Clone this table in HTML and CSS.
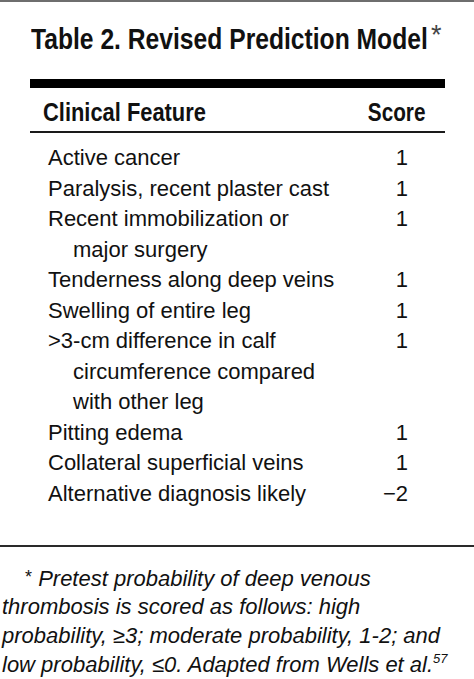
FILE: index.html
```html
<!DOCTYPE html>
<html>
<head>
<meta charset="utf-8">
<link rel="stylesheet" href="styles.css">
</head>
<body>
<div class="page">
  <div class="topbar"></div>
  <h1 class="title"><span class="title-text">Table 2. Revised Prediction Model</span><span class="title-star">*</span></h1>
  <div class="table">
    <div class="thick-rule"></div>
    <div class="head">
      <span class="head-feature">Clinical Feature</span>
      <span class="head-score">Score</span>
    </div>
    <div class="thin-rule"></div>
    <div class="rows">
      <div class="feature">Active cancer</div><div class="score">1</div>
      <div class="feature">Paralysis, recent plaster cast</div><div class="score">1</div>
      <div class="feature">Recent immobilization or<br>major surgery</div><div class="score">1</div>
      <div class="feature">Tenderness along deep veins</div><div class="score">1</div>
      <div class="feature">Swelling of entire leg</div><div class="score">1</div>
      <div class="feature">&gt;3-cm difference in calf<br>circumference compared<br>with other leg</div><div class="score">1</div>
      <div class="feature">Pitting edema</div><div class="score">1</div>
      <div class="feature">Collateral superficial veins</div><div class="score">1</div>
      <div class="feature">Alternative diagnosis likely</div><div class="score">−2</div>
    </div>
  </div>
  <div class="bottom-rule"></div>
  <p class="footnote"><span class="foot-star">*</span> Pretest probability of deep venous<br>thrombosis is scored as follows: high<br>probability, ≥3; moderate probability, 1-2; and<br>low probability, ≤0. Adapted from Wells et al.<sup class="ref">57</sup></p>
</div>
</body>
</html>
```

FILE: styles.css
```css
html, body {
  margin: 0;
  padding: 0;
  background: #ffffff;
}
.page {
  width: 474px;
  height: 679px;
  overflow: hidden;
  font-family: "Liberation Sans", Arial, sans-serif;
  color: #111111;
}
.topbar {
  height: 2px;
  background: #6e6e6e;
}
.title {
  margin: 0;
  padding: 17px 0 0 31px;
  height: 40px;
  font-size: 29px;
  line-height: 40px;
  font-weight: bold;
  white-space: nowrap;
}
.title-text {
  display: inline-block;
  width: 397px;
  transform: scaleX(0.85);
  transform-origin: left center;
}
.title-star {
  display: inline-block;
  font-weight: normal;
  font-size: 27px;
  line-height: 0;
  vertical-align: 5px;
  margin-left: 3px;
  color: #444444;
}
.table {
  margin: 20px 29px 0 30px;
}
.thick-rule {
  height: 9px;
  background: #000000;
}
.head {
  display: flex;
  justify-content: space-between;
  padding: 5px 20px 0 13px;
  font-size: 25px;
  line-height: 38px;
  font-weight: bold;
}
.head-feature {
  display: inline-block;
  transform: scaleX(0.875);
  transform-origin: left center;
}
.head-score {
  display: inline-block;
  transform: scaleX(0.83);
  transform-origin: right center;
}
.thin-rule {
  height: 2px;
  background: #1a1a1a;
}
.rows {
  display: grid;
  grid-template-columns: 1fr auto;
  padding: 10px 37px 0 18px;
  font-size: 22px;
  line-height: 30.55px;
}
.feature {
  padding-left: 25px;
  text-indent: -25px;
}
.score {
  text-align: right;
}
.bottom-rule {
  margin-top: 35px;
  height: 2px;
  background: #2a2a2a;
}
.footnote {
  margin: 0;
  padding: 18px 0 0 2px;
  text-indent: 23px;
  font-size: 22px;
  line-height: 28.7px;
  font-style: italic;
}
.foot-star {
  font-style: normal;
  font-size: 18px;
  vertical-align: 3px;
  line-height: 0;
}
.ref {
  font-size: 13px;
  line-height: 0;
  vertical-align: 9px;
}
```
